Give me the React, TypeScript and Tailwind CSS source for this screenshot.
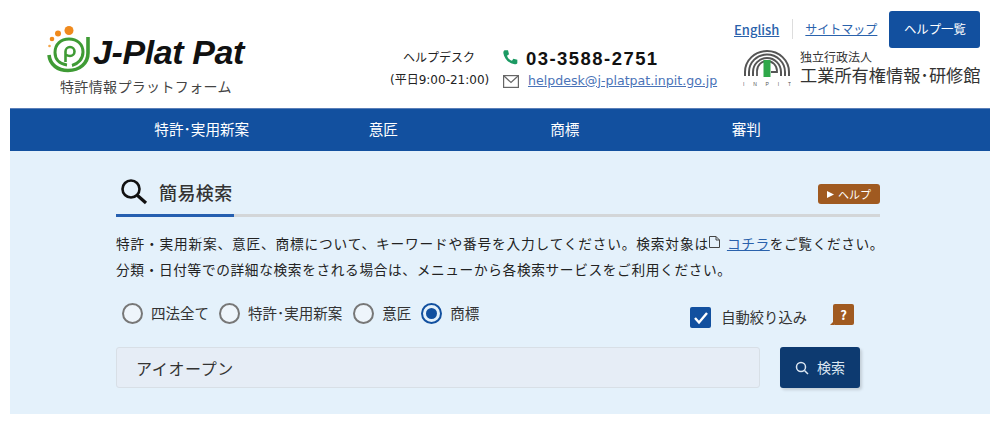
import React from "react";

const jp = { fontFamily: '"Noto Sans CJK JP", "Noto Sans", sans-serif' };

function Swirl() {
  return (
    <svg width="44" height="48" viewBox="0 0 44 48" className="shrink-0">
      <circle cx="22" cy="4.5" r="4.5" fill="#f08a1d" />
      <circle cx="11" cy="7.5" r="3" fill="#f08a1d" />
      <circle cx="5" cy="13" r="2.3" fill="#f08a1d" />
      <circle cx="2.5" cy="20" r="1.3" fill="#f4a64a" />
      <g fill="none" stroke="#3f9b35">
        <path d="M2 29 C3 39 11 44.5 21 44.5 C33 44.5 41 37 41 27 L41 11" strokeWidth="3.6" />
        <path d="M20 39 C12 38 8 33 8 26.5 C8 18 14 13 22 13 C30 13 36 18 36 26 C36 33 31 38 25 39.5" strokeWidth="3" />
        <path d="M18.5 36 L18.5 25.5 C18.5 23 20.5 21 23 21 C25.5 21 27.5 23 27.5 25.5 C27.5 28 25.5 30 23 30 C21.5 30 20 29.5 18.5 28.5" strokeWidth="2.6" />
      </g>
    </svg>
  );
}

function InpitLogo() {
  return (
    <svg width="48" height="38" viewBox="0 0 48 38" className="shrink-0">
      <g fill="none" stroke="#555">
        <path d="M2 27 V23 A22 21 0 0 1 46 23 V27" strokeWidth="2" />
        <path d="M6 27 V23 A18 17.5 0 0 1 42 23 V27" strokeWidth="2" />
        <path d="M10 27 V23 A14 14 0 0 1 38 23 V27" strokeWidth="2" />
        <path d="M14 27 V22 A10 10 0 0 1 34 22 V23 H28" strokeWidth="1.8" />
      </g>
      <rect x="20.5" y="11" width="7" height="17" fill="#2fa84a" />
      <text x="0" y="37" fontSize="5" fill="#555" textLength="48" fontFamily="Liberation Sans, sans-serif">INPIT</text>
    </svg>
  );
}

function Radio({ label, checked, className }: { label: string; checked?: boolean; className?: string }) {
  return (
    <div className={`flex items-center ${className ?? ""}`}>
      {checked ? (
        <span className="w-[21px] h-[21px] rounded-full border-2 border-[#12509f] flex items-center justify-center">
          <span className="w-[11px] h-[11px] rounded-full bg-[#12509f]" />
        </span>
      ) : (
        <span className="w-[21px] h-[21px] rounded-full border-2 border-[#777] bg-[#eef5fb]" />
      )}
      <span className="ml-[8px] text-[14.5px] text-[#333] whitespace-nowrap">{label}</span>
    </div>
  );
}

export default function App() {
  return (
    <div className="w-[1000px] h-[424px] bg-white overflow-hidden px-[10px]" style={jp}>
      <header className="h-[108px] flex">
        <div className="w-[380px] pl-[37px] pt-[26px]">
          <div className="flex items-start">
            <Swirl />
            <span
              className="ml-[2px] mt-[6px] text-[34px] leading-[40px] font-bold italic text-[#111] tracking-[-0.4px] whitespace-nowrap"
              style={{ fontFamily: '"Liberation Sans", sans-serif' }}
            >
              J-Plat Pat
            </span>
          </div>
          <div className="ml-[13px] mt-[3px] text-[14px] leading-[18px] text-[#444] tracking-[0.35px] whitespace-nowrap">特許情報プラットフォーム</div>
        </div>

        <div className="w-[113px] pt-[48px] text-[#222]">
          <div className="pl-[13px] text-[12px] leading-[18px]">ヘルプデスク</div>
          <div className="mt-[5px] leading-[18px] whitespace-nowrap" style={{ fontFamily: '"DejaVu Sans", "Noto Sans CJK JP", sans-serif', fontSize: 12 }}>(平日9:00-21:00)</div>
        </div>

        <div className="w-[230px] pt-[47px]">
          <div className="flex items-center h-[24px]">
            <svg width="16" height="16" viewBox="0 0 24 24" className="ml-[-1px] mt-[-5px]">
              <path d="M4 2 L9 2 L10.5 8 L7.5 10 C9 14 11 16 15 17.5 L17 14.5 L23 16 L23 21 C23 22 21 23 19 23 C10 22 3 14 2 6 C2 4 3 2 4 2 Z" fill="#1b9a63" />
            </svg>
            <span className="ml-[8px] text-[18.5px] font-bold text-[#111] tracking-[1.45px] whitespace-nowrap" style={{ fontFamily: '"Liberation Sans", sans-serif' }}>03-3588-2751</span>
          </div>
          <div className="flex items-center h-[18px] mt-[1px]">
            <svg width="16" height="13" viewBox="0 0 16 13" fill="none" stroke="#666" strokeWidth="1.2">
              <rect x="0.6" y="0.6" width="14.8" height="11.8" />
              <path d="M1 1 L8 7.5 L15 1" />
            </svg>
            <a className="ml-[9px] text-[#4a73b8] underline whitespace-nowrap" style={{ fontFamily: '"DejaVu Sans", sans-serif', fontSize: 12.6 }}>helpdesk@j-platpat.inpit.go.jp</a>
          </div>
        </div>

        <div className="w-[247px] pt-[11px]">
          <div className="flex items-start">
            <a className="mt-[10px] ml-[1px] text-[13px] leading-[17px] font-medium text-[#2a62ac] underline shrink-0">English</a>
            <span className="ml-[13px] mt-[8px] w-[1px] h-[20px] bg-[#ddd] shrink-0" />
            <a className="ml-[12px] mt-[8px] text-[12px] leading-[19px] text-[#2a62ac] underline whitespace-nowrap shrink-0">サイトマップ</a>
            <span className="ml-[12px] w-[91px] h-[37px] shrink-0 bg-[#12509f] rounded-[3px] text-white text-[12.4px] flex items-center justify-center">ヘルプ一覧</span>
          </div>
          <div className="flex items-start mt-[1px] ml-[10px]">
            <InpitLogo />
            <div className="ml-[9px]">
              <div className="text-[12px] leading-[15px] text-[#333]">独立行政法人</div>
              <div className="text-[17.2px] leading-[22px] text-[#333] whitespace-nowrap">工業所有権情報･研修館</div>
            </div>
          </div>
        </div>
      </header>

      <nav className="h-[43px] bg-[#12509f] border-t border-[#5b7fb8] pb-[2px] pl-[101px] grid grid-cols-[repeat(4,181.5px)] items-center text-white text-[14.6px] text-center">
        <span>特許･実用新案</span>
        <span>意匠</span>
        <span>商標</span>
        <span>審判</span>
      </nav>

      <main className="h-[263px] bg-[#e4f1fb] pl-[106px] pt-[23px]">
        <div className="w-[764px]">
          <div className="flex items-start h-[40px]">
            <svg width="30" height="30" viewBox="0 0 30 30" className="ml-[3px] mt-[3px]" fill="none" stroke="#111">
              <circle cx="12" cy="12" r="8.5" strokeWidth="2.6" />
              <path d="M18.5 18.5 L27 26" strokeWidth="3.2" />
            </svg>
            <h1 className="ml-[10px] mt-[4px] text-[18px] leading-[28px] font-medium text-[#333] tracking-[0.4px]">簡易検索</h1>
            <span className="ml-auto mt-[10px] w-[62px] h-[20px] rounded-[3px] bg-[#a05a20] text-white text-[11px] flex items-center justify-center gap-[4px]">
              <svg width="7" height="7" viewBox="0 0 7 7"><path d="M0 0 L7 3.5 L0 7 Z" fill="#fff" /></svg>
              ヘルプ
            </span>
          </div>
          <div className="h-[3px] bg-[#d3d6d8]">
            <div className="w-[118px] h-[3px] bg-[#255fb0]" />
          </div>

          <p className="mt-[13px] text-[13.7px] leading-[26px] text-[#222] whitespace-nowrap">
            <span className="tracking-[0.82px]">特許・実用新案、意匠、商標について、キーワードや番号を入力してください。検索対象は</span>
            <svg width="11" height="12" viewBox="0 0 11 12" className="inline align-[1px]" fill="none" stroke="#444" strokeWidth="1">
              <path d="M0.5 0.5 H7 L10.5 4 V11.5 H0.5 Z M7 0.5 V4 H10.5" />
            </svg>
            <a className="ml-[7px] text-[#2a62ac] underline tracking-[0.6px]">コチラ</a>
            <span className="tracking-[0.6px]">をご覧ください。</span>
            <br />
            <span className="tracking-[0.63px]">分類・日付等での詳細な検索をされる場合は、メニューから各検索サービスをご利用ください。</span>
          </p>

          <div className="flex items-center h-[26px] mt-[18px] pl-[6px]">
            <Radio label="四法全て" />
            <Radio label="特許･実用新案" className="ml-[10px]" />
            <Radio label="意匠" className="ml-[11px]" />
            <Radio label="商標" checked className="ml-[10px]" />
            <div className="ml-auto flex items-start mr-[26px] mt-[4px]">
              <span className="w-[21px] h-[21px] rounded-[2px] bg-[#12509f] flex items-center justify-center mt-[5px]">
                <svg width="16" height="14" viewBox="0 0 16 14" fill="none" stroke="#fff" strokeWidth="2.4"><path d="M2 7 L6 11.5 L14 2" /></svg>
              </span>
              <span className="ml-[10px] mt-[4px] text-[14.3px] leading-[22px] text-[#333]">自動絞り込み</span>
              <span className="relative ml-[26px] mt-[2px] w-[21px] h-[21px] bg-[#a05a20] rounded-[2px] text-white text-[13px] font-bold flex items-center justify-center">
                ?
                <span className="absolute left-[-3px] bottom-0 w-0 h-0 border-t-[4px] border-t-transparent border-r-[4px] border-r-[#a05a20]" />
              </span>
            </div>
          </div>

          <div className="flex mt-[21px]">
            <div className="w-[644px] h-[41px] bg-[#e6edf6] border border-[#d8dfe6] rounded-[3px] pl-[19px] flex items-center text-[16px] text-[#333] tracking-[0.6px]">アイオープン</div>
            <button className="ml-[20px] w-[80px] h-[41px] bg-[#0d3a70] rounded-[3px] shadow-[2px_2px_3px_rgba(0,0,0,0.15)] flex items-center justify-center gap-[8px] text-[14px] text-[#dbe6f2]">
              <svg width="14" height="14" viewBox="0 0 14 14" fill="none" stroke="#dbe6f2" strokeWidth="1.5"><circle cx="6" cy="6" r="4.5" /><path d="M9.5 9.5 L13 13" /></svg>
              検索
            </button>
          </div>
        </div>
      </main>
    </div>
  );
}
